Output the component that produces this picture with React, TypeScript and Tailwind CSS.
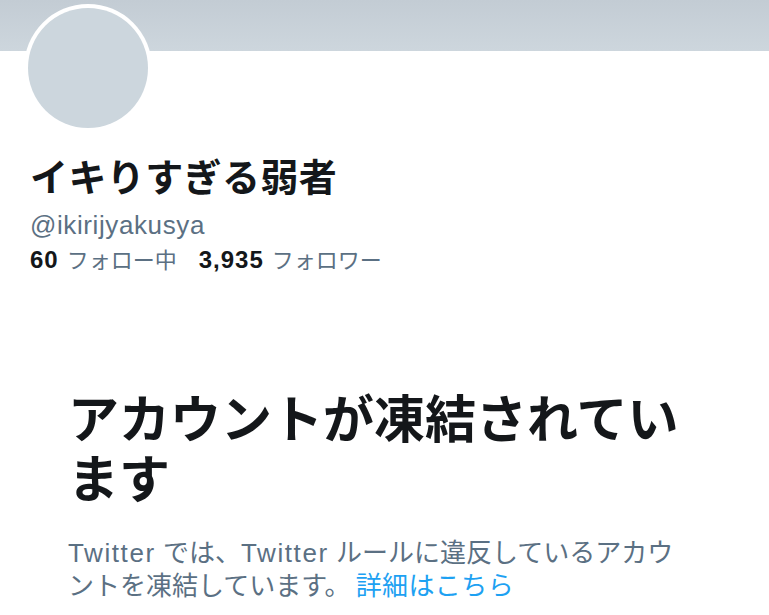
import React from 'react';

const font = { fontFamily: '"Liberation Sans", "Noto Sans CJK JP", sans-serif' };

const App: React.FC = () => {
  return (
    <div className="w-[769px] h-[615px] bg-white overflow-hidden" style={font}>
      {/* Banner */}
      <div className="h-[51px] bg-gradient-to-b from-[#c3ccd4] to-[#cdd6dd]" />

      {/* Profile header */}
      <div className="px-[30px]">
        <div className="-mt-[47px] ml-[-6px] w-[128px] h-[128px] rounded-full bg-white p-[4px]">
          <div className="w-full h-full rounded-full bg-[#ccd6dd]" />
        </div>
        <h1 className="mt-[22px] text-[38px] leading-[48px] font-bold text-[#14171a] tracking-[0.4px]">
          イキりすぎる弱者
        </h1>
        <p className="mt-[8px] text-[26px] leading-[30px] tracking-[0.6px] text-[#5b7083]">@ikirijyakusya</p>
        <div className="mt-[6px] flex items-center gap-[22px] text-[22px] leading-[28px]">
          <span>
            <span className="font-bold text-[24px] tracking-[1px] text-[#14171a]">60</span>
            <span className="ml-[8px] text-[#5b7083]">フォロー中</span>
          </span>
          <span>
            <span className="font-bold text-[24px] tracking-[1px] text-[#14171a]">3,935</span>
            <span className="ml-[8px] text-[#5b7083]">フォロワー</span>
          </span>
        </div>
      </div>

      {/* Suspended notice */}
      <div className="ml-[68px] mt-[116px] w-[622px]">
        <h2 className="text-[51px] leading-[60px] font-bold text-[#14171a]">
          アカウントが凍結されています
        </h2>
        <p className="mt-[26px] w-[612px] text-[26px] leading-[33px] text-[#5b7083]">
          <span className="tracking-[1.6px]">Twitter</span> では、<span className="tracking-[1.6px]">Twitter</span> ルールに違反しているアカウントを凍結しています。
          <span className="ml-[5px] text-[#1da1f2] tracking-[0.4px]">詳細はこちら</span>
        </p>
      </div>
    </div>
  );
};

export default App;
